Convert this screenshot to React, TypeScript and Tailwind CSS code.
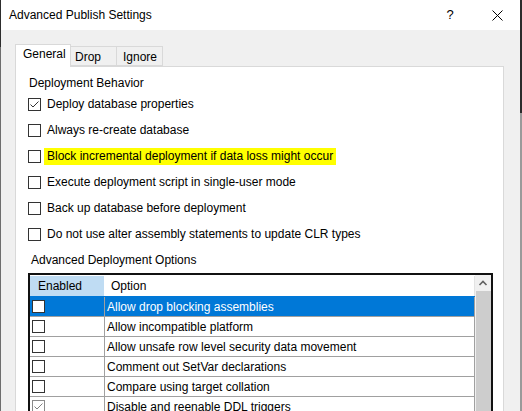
import React from 'react';

const behaviors = [
  { label: 'Deploy database properties', checked: true },
  { label: 'Always re-create database' },
  { label: 'Block incremental deployment if data loss might occur', highlight: true },
  { label: 'Execute deployment script in single-user mode' },
  { label: 'Back up database before deployment' },
  { label: 'Do not use alter assembly statements to update CLR types' },
];

const options = [
  { label: 'Allow drop blocking assemblies', selected: true },
  { label: 'Allow incompatible platform' },
  { label: 'Allow unsafe row level security data movement' },
  { label: 'Comment out SetVar declarations' },
  { label: 'Compare using target collation' },
  { label: 'Disable and reenable DDL triggers', checked: true },
];

function CheckBox({ checked, dim }: { checked?: boolean; dim?: boolean }) {
  return (
    <span
      className={`flex h-[13px] w-[13px] shrink-0 items-center justify-center border bg-white ${
        dim ? 'border-[#8a8a8a]' : 'border-[#333333]'
      }`}
    >
      {checked && (
        <svg width="11" height="11" viewBox="0 0 11 11">
          <path d="M1.5 5.5 L4 8 L9.5 2.5" fill="none" stroke={dim ? '#808080' : '#333333'} strokeWidth="1" />
        </svg>
      )}
    </span>
  );
}

export default function App() {
  return (
    <div className="flex h-[411px] w-[522px] overflow-hidden font-['Liberation_Sans',Arial,sans-serif] text-[12px] leading-[16px] text-black">
      {/* window edge, left */}
      <div className="flex w-px shrink-0 flex-col">
        <div className="h-[47px] bg-[#2d2d2d]" />
        <div className="flex-1 bg-[#6e6e6e]" />
      </div>

      <div className="flex w-[519px] shrink-0 flex-col">
        {/* title bar */}
        <div className="flex h-[30px] shrink-0 items-center bg-white pl-[8px]">
          <span>Advanced Publish Settings</span>
          <span className="ml-auto flex w-[30px] justify-center text-[13px]">?</span>
          <span className="ml-[17px] mr-[8px] flex w-[30px] justify-center">
            <svg width="11" height="11" viewBox="0 0 11 11">
              <path d="M0.5 0.5 L10.5 10.5 M10.5 0.5 L0.5 10.5" stroke="#000" strokeWidth="1" />
            </svg>
          </span>
        </div>

        {/* body */}
        <div className="flex flex-1 flex-col bg-[#f0f0f0] pl-[14px] pt-[14px]">
          <div className="relative z-10 flex h-[22px] items-end">
            <div className="-mb-px h-[23px] w-[56px] border border-b-0 border-[#d9d9d9] bg-white pl-[7px] pt-px">General</div>
            <div className="h-[20px] w-[46px] border-y border-r border-[#d9d9d9] pl-[4px] pt-[2px]">Drop</div>
            <div className="h-[20px] w-[46px] border-y border-r border-[#d9d9d9] pl-[6px] pt-[2px]">Ignore</div>
          </div>

          <div className="w-[489px] flex-1 border border-[#d9d9d9] bg-white pl-[12px] pt-[8px]">
            <div className="pl-px">Deployment Behavior</div>
            {behaviors.map((b) => (
              <div key={b.label} className="flex h-[26px] items-center gap-[6px]">
                <CheckBox checked={b.checked} />
                {b.highlight ? (
                  <span className="-ml-[3px] flex h-[17px] items-center bg-[#ffff00] px-[3px]">{b.label}</span>
                ) : (
                  <span>{b.label}</span>
                )}
              </div>
            ))}
            <div className="mt-[5px] pl-[3px]">Advanced Deployment Options</div>

            {/* options grid */}
            <div className="mt-[5px] flex w-[465px] border-2 border-[#111111] bg-white">
              <div className="w-[445px]">
                <div className="flex h-[21px] pt-px">
                  <div className="flex w-[74px] items-center bg-[#bfdcf3] pl-[8px]">Enabled</div>
                  <div className="flex flex-1 items-center border-r border-[#e3e3e3] pl-[7px]">Option</div>
                </div>
                {options.map((o) => (
                  <div
                    key={o.label}
                    className={`flex h-[20px] border-t ${o.selected ? 'border-[#0078d7] bg-[#0078d7] text-white' : 'border-[#a0a0a0]'}`}
                  >
                    <div className="flex w-[74px] items-center pl-[2px]">
                      <CheckBox checked={o.checked} dim={o.checked} />
                    </div>
                    <div className="flex flex-1 items-center border-x border-[#a0a0a0] pl-[2px]">{o.label}</div>
                  </div>
                ))}
              </div>
              <div className="flex w-[16px] flex-col bg-[#f0f0f0]">
                <div className="flex h-[16px] items-center justify-center">
                  <svg width="16" height="16" viewBox="0 0 16 16">
                    <path d="M4.5 10 L8 6.5 L11.5 10" fill="none" stroke="#606060" strokeWidth="1.6" />
                  </svg>
                </div>
                <div className="ml-px flex-1 bg-[#cdcdcd]" />
              </div>
            </div>
          </div>
        </div>
      </div>

      {/* window edge, right */}
      <div className="flex w-[2px] shrink-0 flex-col">
        <div className="h-[113px] bg-[#2b2b2b]" />
        <div className="flex-1 bg-[#9a9a9a]" />
      </div>
    </div>
  );
}
